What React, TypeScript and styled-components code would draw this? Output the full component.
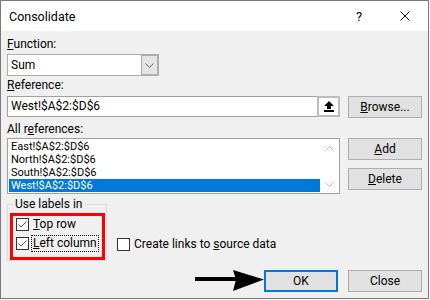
import styled, { createGlobalStyle } from 'styled-components'

const GlobalStyle = createGlobalStyle`
  html, body {
    margin: 0;
    padding: 0;
    background: #ffffff;
  }
  body {
    font-family: Roboto, "Noto Sans", "Liberation Sans", sans-serif;
    font-size: 12px;
    color: #000000;
  }
`

const Window = styled.div`
  width: 429px;
  height: 299px;
  box-sizing: border-box;
  border: 1px solid #7a7a7a;
  background: #f0f0f0;
  display: flex;
  flex-direction: column;
`

const TitleBar = styled.div`
  height: 30px;
  background: #ffffff;
  display: flex;
  align-items: center;
  padding: 0 0 0 8px;
  line-height: 15px;
`

const Title = styled.span`
  flex: 1;
  font-size: 12.5px;
`

const TitleButton = styled.span`
  width: 46px;
  height: 30px;
  display: flex;
  align-items: center;
  justify-content: center;
  font-size: 13px;
`

const Body = styled.div`
  flex: 1;
  padding: 0 6px 0 6px;
  display: grid;
  grid-template-columns: 333px 74px;
  column-gap: 8px;
  align-content: start;
`

const Label = styled.div<{ $top: number }>`
  grid-column: 1 / -1;
  margin-top: ${(p) => p.$top}px;
  line-height: 15px;
  height: 15px;
`

const Key = styled.u`
  text-decoration: underline;
  text-underline-offset: 1px;
`

const Select = styled.div`
  grid-column: 1 / -1;
  margin-top: 2px;
  width: 152px;
  height: 22px;
  box-sizing: border-box;
  border: 1px solid #adadad;
  background: #ffffff;
  display: flex;
`

const SelectValue = styled.span`
  flex: 1;
  padding-left: 3px;
  line-height: 20px;
`

const SelectArrow = styled.span`
  width: 17px;
  background: #e5e5e5;
  box-shadow: inset 1px 0 0 #adadad, inset -1px 0 0 #adadad, inset 0 1px 0 #adadad, inset 0 -1px 0 #adadad;
  display: flex;
  align-items: center;
  justify-content: center;
`

const TextField = styled.div<{ $mt: number }>`
  margin-top: ${(p) => p.$mt}px;
  height: 21px;
  box-sizing: border-box;
  border: 1px solid #a0a0a0;
  background: #ffffff;
  display: flex;
`

const FieldText = styled.span`
  flex: 1;
  padding-left: 3px;
  line-height: 19px;
`

const PickButton = styled.span`
  width: 23px;
  margin: -1px -1px -1px 0;
  box-sizing: border-box;
  border: 2px solid #bdbdbd;
  background: #ffffff;
  display: flex;
  align-items: center;
  justify-content: center;
`

const Button = styled.div<{ $mt?: number; $default?: boolean }>`
  margin-top: ${(p) => p.$mt ?? 0}px;
  width: 74px;
  height: 22px;
  box-sizing: border-box;
  border: ${(p) => (p.$default ? '2px solid #0078d7' : '1px solid #adadad')};
  background: #e1e1e1;
  display: flex;
  align-items: center;
  justify-content: center;
  line-height: 15px;
`

const ListBox = styled.div`
  margin-top: 1px;
  height: 56px;
  box-sizing: border-box;
  border: 1px solid #a0a0a0;
  background: #ffffff;
  display: flex;
  padding: 0 1px 0 1px;
`

const Items = styled.div`
  flex: 1;
  padding-top: 1px;
`

const Item = styled.div<{ $selected?: boolean }>`
  height: 13px;
  line-height: 13px;
  font-size: 11px;
  padding-left: 2px;
  background: ${(p) => (p.$selected ? '#0078d7' : 'transparent')};
  color: ${(p) => (p.$selected ? '#ffffff' : '#000000')};
`

const ScrollBar = styled.div`
  width: 18px;
  display: flex;
  flex-direction: column;
  justify-content: space-between;
  align-items: center;
  padding: 7px 0 6px;
`

const ButtonColumn = styled.div`
  margin-top: 1px;
  display: flex;
  flex-direction: column;
`

const OptionsRow = styled.div`
  grid-column: 1 / -1;
  margin-top: 3px;
  display: flex;
  gap: 10px;
`

const Group = styled.fieldset`
  margin: 0;
  width: 100px;
  box-sizing: border-box;
  border: 1px solid #dcdcdc;
  padding: 0 1px 0 2px;
`

const Legend = styled.legend`
  margin-left: 4px;
  padding: 0 1px;
  line-height: 15px;
`

const Highlight = styled.div`
  margin-top: 1px;
  width: 95px;
  height: 47px;
  box-sizing: border-box;
  border: 3px solid #ff0000;
  padding-left: 3px;
  display: flex;
  flex-direction: column;
  gap: 2px;
`

const CheckRow = styled.div<{ $bottom?: number }>`
  height: 17px;
  display: flex;
  align-items: center;
  gap: 2px;
  align-self: ${(p) => (p.$bottom !== undefined ? 'flex-end' : 'auto')};
  margin-bottom: ${(p) => p.$bottom ?? 0}px;
`

const Box = styled.span`
  width: 13px;
  height: 13px;
  box-sizing: border-box;
  border: 1px solid #333333;
  background: #ffffff;
  display: flex;
  align-items: center;
  justify-content: center;
`

const CheckText = styled.span<{ $focus?: boolean }>`
  padding: 0 1px;
  line-height: 15px;
  border: 1px dotted ${(p) => (p.$focus ? '#000000' : 'transparent')};
`

const Footer = styled.div`
  grid-column: 1 / -1;
  margin-top: 9px;
  display: flex;
  justify-content: flex-end;
  gap: 10px;
`

const Pointer = styled.div`
  display: flex;
  align-items: center;
`

function Check({ checked }: { checked: boolean }) {
  return (
    <Box>
      {checked && (
        <svg width="11" height="11" viewBox="0 0 11 11">
          <polyline points="1.5,5.5 4,8 9.5,2.5" fill="none" stroke="#555" strokeWidth="1" />
        </svg>
      )}
    </Box>
  )
}

function Chevron({ up, color }: { up?: boolean; color: string }) {
  return (
    <svg width="9" height="5" viewBox="0 0 9 5">
      <polyline
        points={up ? '0.5,4.5 4.5,0.5 8.5,4.5' : '0.5,0.5 4.5,4.5 8.5,0.5'}
        fill="none"
        stroke={color}
        strokeWidth="1"
      />
    </svg>
  )
}

export default function App() {
  return (
    <>
      <GlobalStyle />
      <Window>
        <TitleBar>
          <Title>Consolidate</Title>
          <TitleButton>?</TitleButton>
          <TitleButton>
            <svg width="10" height="10" viewBox="0 0 10 10">
              <path d="M0.5 0.5 L9.5 9.5 M9.5 0.5 L0.5 9.5" stroke="#111" strokeWidth="1" />
            </svg>
          </TitleButton>
        </TitleBar>
        <Body>
          <Label $top={6}>
            <Key>F</Key>unction:
          </Label>
          <Select>
            <SelectValue>Sum</SelectValue>
            <SelectArrow>
              <Chevron color="#606060" />
            </SelectArrow>
          </Select>
          <Label $top={2}>
            <Key>R</Key>eference:
          </Label>
          <TextField $mt={3}>
            <FieldText>West!$A$2:$D$6</FieldText>
            <PickButton>
              <svg width="10" height="11" viewBox="0 0 10 11">
                <path d="M5 0 L10 5 L7 5 L7 8 L3 8 L3 5 L0 5 Z" fill="#000" />
                <rect x="0" y="9" width="10" height="2" fill="#000" />
              </svg>
            </PickButton>
          </TextField>
          <Button $mt={3}>
            <span>
              <Key>B</Key>rowse...
            </span>
          </Button>
          <Label $top={4}>
            All r<Key>e</Key>ferences:
          </Label>
          <ListBox>
            <Items>
              <Item>East!$A$2:$D$6</Item>
              <Item>North!$A$2:$D$6</Item>
              <Item>South!$A$2:$D$6</Item>
              <Item $selected>West!$A$2:$D$6</Item>
            </Items>
            <ScrollBar>
              <Chevron up color="#c2c2c2" />
              <Chevron color="#c2c2c2" />
            </ScrollBar>
          </ListBox>
          <ButtonColumn>
            <Button>
              <span>
                <Key>A</Key>dd
              </span>
            </Button>
            <Button $mt={8}>
              <span>
                <Key>D</Key>elete
              </span>
            </Button>
          </ButtonColumn>
          <OptionsRow>
            <Group>
              <Legend>Use labels in</Legend>
              <Highlight>
                <CheckRow>
                  <Check checked />
                  <CheckText>
                    <Key>T</Key>op row
                  </CheckText>
                </CheckRow>
                <CheckRow>
                  <Check checked />
                  <CheckText $focus>
                    <Key>L</Key>eft column
                  </CheckText>
                </CheckRow>
              </Highlight>
            </Group>
            <CheckRow $bottom={8}>
              <Check checked={false} />
              <CheckText>
                Create links to <Key>s</Key>ource data
              </CheckText>
            </CheckRow>
          </OptionsRow>
          <Footer>
            <Pointer>
              <svg width="69" height="22" viewBox="0 0 69 22">
                <rect x="0" y="7" width="42" height="4" fill="#000" />
                <path d="M38 0 L69 9.5 L38 21 L41 9.5 Z" fill="#000" />
              </svg>
              <Button $default>OK</Button>
            </Pointer>
            <Button>Close</Button>
          </Footer>
        </Body>
      </Window>
    </>
  )
}
